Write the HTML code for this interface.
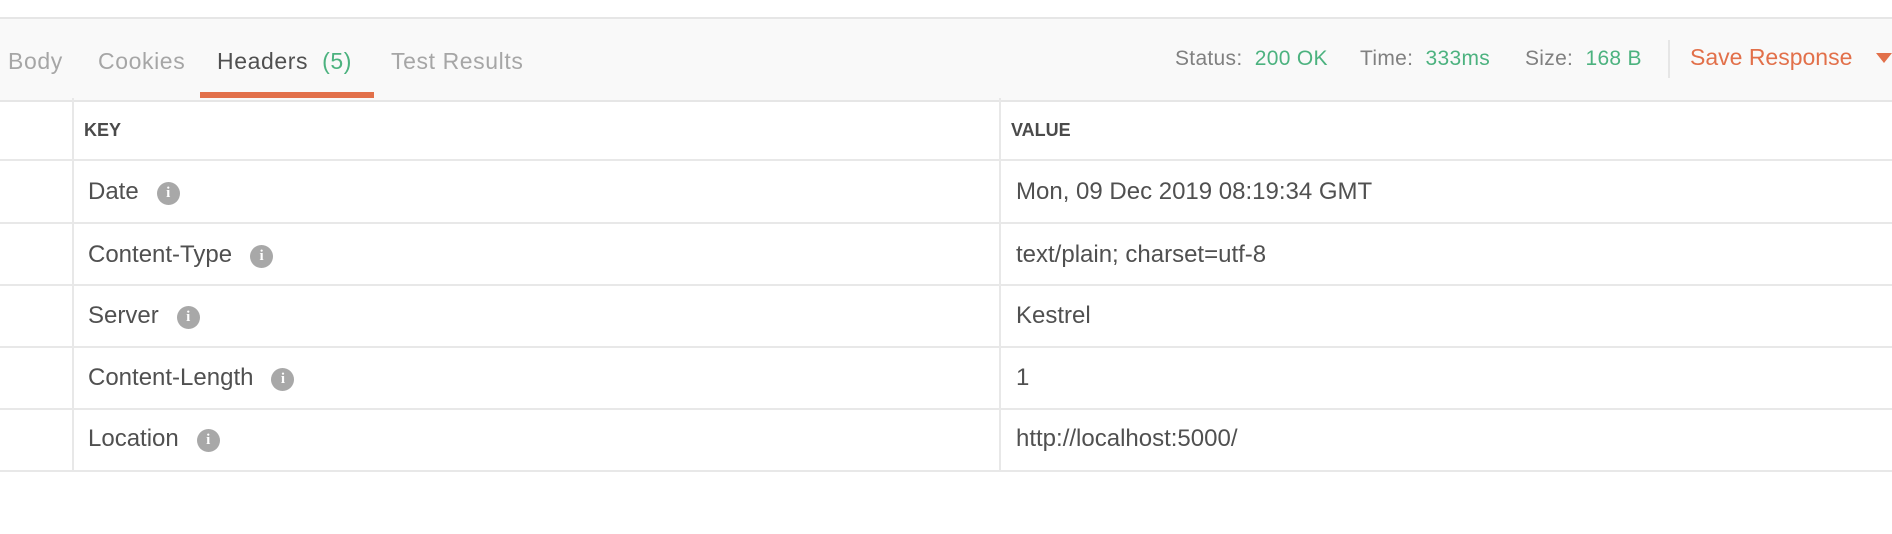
<!DOCTYPE html>
<html><head><style>
body{margin:0;width:1892px;height:534px;background:#fff;font-family:"Liberation Sans",sans-serif;color:#505050;position:relative;overflow:hidden}
.a{position:absolute;white-space:nowrap}
.bar{position:absolute;left:0;top:17px;width:1892px;height:81px;background:#f9f9f9;border-top:2px solid #e6e6e6;border-bottom:2px solid #e6e6e6}
.tab{font-size:23px;color:#a6a6a6;top:48px;letter-spacing:0.6px}
.hl{position:absolute;left:0;width:1892px;height:2px;background:#e8e8e8}
.vl{position:absolute;top:98px;width:2px;height:373px;background:#e8e8e8}
.k{font-size:24px;color:#505050}
.i{display:inline-block;width:23px;height:23px;border-radius:50%;background:#a8a8a8;color:#fff;font-size:15px;font-weight:bold;text-align:center;line-height:23px;vertical-align:2px;margin-left:18px;font-family:"Liberation Serif",serif}
.s{font-size:21px;color:#808080;top:47px;letter-spacing:0.3px}
.g{color:#4cb27f}
</style></head><body>
<div class="bar"></div>
<div class="a tab" style="left:8px">Body</div>
<div class="a tab" style="left:98px">Cookies</div>
<div class="a tab" style="left:217px;color:#505050">Headers&nbsp; <span class="g">(5)</span></div>
<div class="a tab" style="left:391px">Test Results</div>
<div style="position:absolute;left:200px;top:92px;width:174px;height:6px;background:#e2704a"></div>
<div class="a s" style="left:1175px">Status:&nbsp; <span class="g">200 OK</span></div>
<div class="a s" style="left:1360px">Time:&nbsp; <span class="g">333ms</span></div>
<div class="a s" style="left:1525px">Size:&nbsp; <span class="g">168 B</span></div>
<div style="position:absolute;left:1668px;top:40px;width:2px;height:38px;background:#e6e6e6"></div>
<div class="a" style="left:1690px;top:44px;font-size:23px;color:#e2704a">Save Response</div>
<div class="a" style="left:1876px;top:53px;width:0;height:0;border-left:8px solid transparent;border-right:8px solid transparent;border-top:10px solid #e2704a"></div>
<div class="vl" style="left:72px"></div>
<div class="vl" style="left:999px"></div>
<div class="hl" style="top:159px"></div>
<div class="hl" style="top:222px"></div>
<div class="hl" style="top:284px"></div>
<div class="hl" style="top:346px"></div>
<div class="hl" style="top:408px"></div>
<div class="hl" style="top:470px"></div>
<div class="a" style="left:84px;top:120px;font-size:18px;font-weight:bold;color:#4a4a4a">KEY</div>
<div class="a" style="left:1011px;top:120px;font-size:18px;font-weight:bold;color:#4a4a4a">VALUE</div>
<div class="a k" style="left:88px;top:178px">Date<span class="i">i</span></div>
<div class="a k" style="left:1016px;top:178px">Mon, 09 Dec 2019 08:19:34 GMT</div>
<div class="a k" style="left:88px;top:241px">Content-Type<span class="i">i</span></div>
<div class="a k" style="left:1016px;top:241px">text/plain; charset=utf-8</div>
<div class="a k" style="left:88px;top:302px">Server<span class="i">i</span></div>
<div class="a k" style="left:1016px;top:302px">Kestrel</div>
<div class="a k" style="left:88px;top:364px">Content-Length<span class="i">i</span></div>
<div class="a k" style="left:1016px;top:364px">1</div>
<div class="a k" style="left:88px;top:425px">Location<span class="i">i</span></div>
<div class="a k" style="left:1016px;top:425px">http://localhost:5000/</div>
</body></html>
